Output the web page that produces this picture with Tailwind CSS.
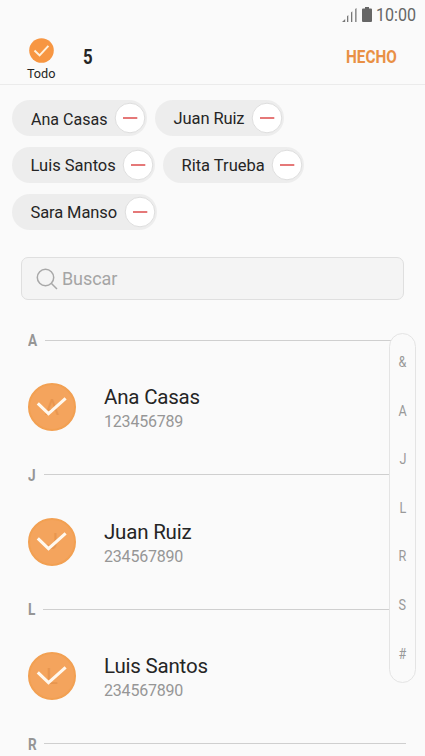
<!DOCTYPE html>
<html lang="es">
<head>
<meta charset="utf-8">
<title>Contactos</title>
<script src="https://cdn.jsdelivr.net/npm/@tailwindcss/browser@4"></script>
</head>
<body class="bg-[#fafafa]">
<svg class="hidden">
  <symbol id="minus" viewBox="0 0 32 32"><circle cx="16" cy="16" r="14.800" fill="#fff" stroke="#dedede"/><path d="M9 16h14.300" stroke="#e57878" stroke-width="2"/></symbol>
  <symbol id="check" viewBox="0 0 48 48"><path d="M9.800 20.300 20.500 30.700 37.600 15.400" fill="none" stroke="#fff8ee" stroke-width="3.100"/></symbol>
</svg>
<div class="relative flex h-[756px] w-[425px] flex-col overflow-hidden bg-[#fafafa] font-['Roboto',sans-serif] text-[#252525]">
  <div class="flex h-[30px] shrink-0 pl-[342px]">
    <svg class="mt-[8px] h-[14px] w-[15px]" viewBox="0 0 15 14" fill="#777"><path d="M0 14 3.200 11v3zM5 8.200 6.300 7v7H5zM9 4.500 10.300 3.300V14H9zM13.200 1 14.500 0v14h-1.300z"/></svg>
    <svg class="ml-[5px] mt-[7px] h-[15px] w-[10px]" viewBox="0 0 10 15" fill="#666"><path d="M3 0h4v1.500h2q1 0 1 1V14q0 1-1 1H1q-1 0-1-1V2.500q0-1 1-1h2z"/></svg>
    <div class="ml-[4px] mt-[5px] origin-left scale-x-[.87] text-[18.500px] leading-[20px] text-[#666]">10:00</div>
  </div>
  <div class="flex h-[55px] shrink-0 border-b border-[#ebebeb]">
    <div class="ml-[21px] flex w-[41px] flex-col items-center pt-[8px]">
      <svg class="h-[25px] w-[25px] shrink-0" viewBox="0 0 25 25"><circle cx="12.500" cy="12.500" r="12.300" fill="#f79642"/><path d="m5.500 12.500 5.100 4.900 8.800-9.500" fill="none" stroke="#fff1dc" stroke-width="2"/></svg>
      <span class="mt-[3px] scale-x-[.94] text-[13.500px] leading-[14px]">Todo</span>
    </div>
    <div class="ml-[21px] mt-[15px] origin-left scale-x-[.84] text-[20px] font-bold leading-[24px]">5</div>
    <div class="ml-[252px] mt-[15px] origin-left scale-x-[.85] text-[18px] font-bold leading-[24px] text-[#e99045]">HECHO</div>
  </div>
  <div class="flex shrink-0 flex-col gap-[11px] pl-[12px] pt-[15px] text-[17px] leading-[36px]">
    <div class="flex h-[36px] gap-[8px]">
      <div class="flex w-[135px] items-center justify-between rounded-full bg-[#ededed] pl-[18.500px] pr-[1px]"><span class="w-0 origin-left scale-x-[.945] whitespace-nowrap pt-px">Ana Casas</span><svg class="h-8 w-8"><use href="#minus"/></svg></div>
      <div class="flex w-[129px] items-center justify-between rounded-full bg-[#ededed] pl-[18.500px] pr-[1px]"><span class="w-0 whitespace-nowrap pt-px text-[16.500px] tracking-[-.1px]">Juan Ruiz</span><svg class="h-8 w-8"><use href="#minus"/></svg></div>
    </div>
    <div class="flex h-[36px] gap-[8px]">
      <div class="flex w-[143px] items-center justify-between rounded-full bg-[#ededed] pl-[18.500px] pr-[1px]"><span class="w-0 whitespace-nowrap pt-px text-[16.500px]">Luis Santos</span><svg class="h-8 w-8"><use href="#minus"/></svg></div>
      <div class="flex w-[141px] items-center justify-between rounded-full bg-[#ededed] pl-[18.500px] pr-[1px]"><span class="w-0 whitespace-nowrap pt-px text-[16.500px]">Rita Trueba</span><svg class="h-8 w-8"><use href="#minus"/></svg></div>
    </div>
    <div class="flex h-[36px]">
      <div class="flex w-[145px] items-center justify-between rounded-full bg-[#ededed] pl-[18.500px] pr-[1px]"><span class="w-0 whitespace-nowrap pt-px text-[16.500px] tracking-[-.1px]">Sara Manso</span><svg class="h-8 w-8"><use href="#minus"/></svg></div>
    </div>
  </div>
  <div class="ml-[21px] mt-[27px] flex h-[43px] w-[383px] shrink-0 items-center rounded-[7px] border border-[#dfdfdf] bg-[#f4f4f4] pl-[14px] text-[18px] text-[#a5a5a5]">
    <svg class="h-[22px] w-[22px]" viewBox="0 0 22 22" fill="none" stroke="#a8a8a8" stroke-width="1.500"><circle cx="9.500" cy="9.500" r="8.200"/><path d="m15.500 15.500 5.500 5.500"/></svg>
    <span class="ml-[4px] tracking-[-.1px]">Buscar</span>
  </div>
  <div class="mt-[28px] flex shrink-0 flex-col">
    <section class="h-[134.600px]">
      <div class="flex h-[24px] items-center pl-[28px]"><span class="w-[17px] origin-left scale-x-[.85] pt-[2px] text-[16px] font-bold text-[#969696]">A</span><i class="h-px w-[361px] bg-[#cfcfcf]"></i></div>
      <div class="flex pl-[28px] pt-[31px]">
        <div class="relative flex h-[48px] w-[48px] items-center justify-center rounded-full border-2 border-[#f2a052] bg-[#f4a45d] text-[22px] text-[#e8964f]">A<svg class="absolute -left-[2px] -top-[2px] h-12 w-12"><use href="#check"/></svg></div>
        <div class="ml-[28px] pt-[2px]"><div class="text-[20.500px] leading-[25px] tracking-[-.2px]">Ana Casas</div><div class="text-[16px] leading-[23px] tracking-[-.2px] text-[#969696]">123456789</div></div>
      </div>
    </section>
    <section class="h-[134.600px]">
      <div class="flex h-[24px] items-center pl-[28px]"><span class="w-[16px] origin-left scale-x-[.85] pt-[2px] text-[16px] font-bold text-[#969696]">J</span><i class="h-px w-[362px] bg-[#cfcfcf]"></i></div>
      <div class="flex pl-[28px] pt-[31px]">
        <div class="relative flex h-[48px] w-[48px] items-center justify-center rounded-full border-2 border-[#f2a052] bg-[#f4a45d] text-[22px] text-[#e8964f]">J<svg class="absolute -left-[2px] -top-[2px] h-12 w-12"><use href="#check"/></svg></div>
        <div class="ml-[28px] pt-[2px]"><div class="text-[20.500px] leading-[25px] tracking-[-.2px]">Juan Ruiz</div><div class="text-[16px] leading-[23px] tracking-[-.2px] text-[#969696]">234567890</div></div>
      </div>
    </section>
    <section class="h-[134.600px]">
      <div class="flex h-[24px] items-center pl-[28px]"><span class="w-[15px] origin-left scale-x-[.85] pt-[2px] text-[16px] font-bold text-[#969696]">L</span><i class="h-px w-[363px] bg-[#cfcfcf]"></i></div>
      <div class="flex pl-[28px] pt-[31px]">
        <div class="relative flex h-[48px] w-[48px] items-center justify-center rounded-full border-2 border-[#f2a052] bg-[#f4a45d] text-[22px] text-[#e8964f]">L<svg class="absolute -left-[2px] -top-[2px] h-12 w-12"><use href="#check"/></svg></div>
        <div class="ml-[28px] pt-[2px]"><div class="text-[20.500px] leading-[25px] tracking-[-.2px]">Luis Santos</div><div class="text-[16px] leading-[23px] tracking-[-.2px] text-[#969696]">234567890</div></div>
      </div>
    </section>
    <div class="flex h-[24px] items-center pl-[28px]"><span class="w-[16px] origin-left scale-x-[.85] pt-[2px] text-[16px] font-bold text-[#969696]">R</span><i class="h-px w-[362px] bg-[#cfcfcf]"></i></div>
  </div>
  <nav class="absolute left-[389px] top-[333px] flex h-[350px] w-[27px] flex-col items-center rounded-full border border-[#e4e4e4] bg-[#fafafa] pt-[4px] text-[14px] leading-[48.600px] text-[#999]">
    <span class="scale-x-90">&amp;</span><span class="scale-x-90">A</span><span class="scale-x-90">J</span><span class="scale-x-90">L</span><span class="scale-x-90">R</span><span class="scale-x-90">S</span><span class="scale-x-90">#</span>
  </nav>
</div>
</body>
</html>
